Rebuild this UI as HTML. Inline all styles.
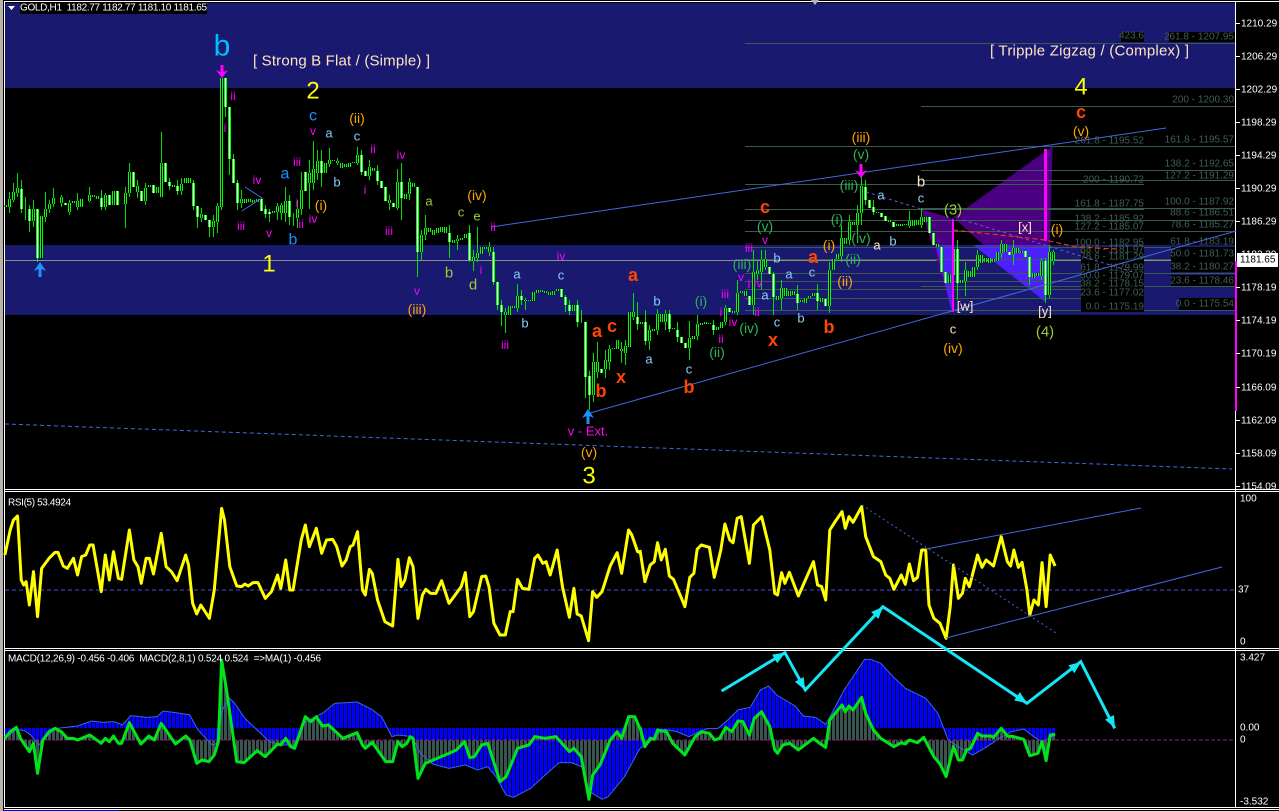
<!DOCTYPE html>
<html><head><meta charset="utf-8"><title>GOLD,H1</title>
<style>
html,body{margin:0;padding:0;background:#000;width:1279px;height:811px;overflow:hidden}
svg{display:block}
text{font-family:"Liberation Sans",sans-serif;font-size:12px;text-anchor:middle;dominant-baseline:central;white-space:pre}
.m{fill:#f0f}.o{fill:#ffa500;font-size:14px}.g{fill:#2fb35a;font-size:14px}.l{fill:#87cefa;font-size:13px}.n{fill:#9acd32;font-size:13px}.s{fill:#ffe4c4;font-size:13px}
.B{fill:#1e90ff;font-size:16px}.Y{fill:#ff0;font-size:24px}.r{fill:#ff4500;font-size:18px;font-weight:bold}
.ax text,.w{fill:#fff;font-size:10px;text-anchor:start}
.f text{fill:#3f5f55;font-size:10px;text-anchor:end}
.p{vector-effect:non-scaling-stroke;fill:none}
</style></head><body>
<svg width="1279" height="811" viewBox="0 0 1279 811" xmlns="http://www.w3.org/2000/svg">
<defs>
<pattern id="pb" patternUnits="userSpaceOnUse" width="9.8" height="3"><rect width="9.8" height="3" fill="#000030"/><rect width="7.35" height="3" fill="#0000ff"/></pattern>
<pattern id="pg" patternUnits="userSpaceOnUse" width="9.8" height="3"><rect width="9.8" height="3" fill="#000"/><rect width="7.35" height="3" fill="#38544f"/></pattern>
</defs>
<rect width="1279" height="811" fill="#000"/>
<rect x="0" y="0" width="3" height="811" fill="#b8b4ac"/>
<!-- bands -->
<rect x="5" y="3" width="1230" height="85" fill="#191970"/>
<rect x="5" y="245" width="1230" height="70" fill="#191970"/>
<!-- frames -->
<g fill="#fff">
<rect x="4" y="1" width="1275" height="1"/><rect x="4" y="1" width="1" height="807"/><rect x="1235" y="1" width="1" height="807"/>
<rect x="4" y="489" width="1275" height="1"/><rect x="4" y="491" width="1275" height="1"/>
<rect x="4" y="648" width="1275" height="1"/><rect x="4" y="650" width="1275" height="1"/>
<rect x="4" y="807" width="1275" height="1"/><rect x="4" y="809" width="1275" height="1"/>
</g>
<rect x="4" y="810" width="115" height="1" fill="#00f"/>
<path d="M811 0h8l-4 5z" fill="#b0b0b0"/>
<!-- price line -->
<rect x="5" y="260" width="1230" height="1" fill="#8c8c8c"/>
<!-- purple harmonic shapes -->
<g transform="translate(850 130) scale(.33333)">
<g fill="#4b0082"><path d="M215 238L305 545L310 266Z"/><path d="M310 262L608 48L600 340L585 515Z"/></g>
<g fill="#4f20ff"><path d="M256 345L305 545L310 345Z"/><path d="M370 345L600 345L585 515Z"/></g>
</g>
<!-- fib lines -->
<g fill="#3a5a50">
<rect x="745" y="43" width="490" height="1"/><rect x="921" y="106" width="314" height="1"/>
<rect x="745" y="146" width="490" height="1"/><rect x="921" y="170" width="314" height="1"/><rect x="921" y="180" width="314" height="1"/>
<rect x="745" y="184" width="399" height="1"/><rect x="921" y="208" width="314" height="1"/><rect x="745" y="209" width="399" height="1"/>
<rect x="745" y="220" width="490" height="1"/><rect x="745" y="231" width="490" height="1"/><rect x="745" y="247" width="490" height="1"/>
<rect x="745" y="259" width="490" height="1"/><rect x="745" y="273" width="490" height="1"/><rect x="745" y="281" width="399" height="1"/>
<rect x="921" y="286" width="314" height="1"/><rect x="745" y="289" width="399" height="1"/><rect x="745" y="298" width="399" height="1"/>
<rect x="745" y="310" width="490" height="1"/>
</g>
<!-- fib label backgrounds -->
<g fill="#000">
<rect x="20" y="3" width="187" height="11"/>
<rect x="1121" y="32" width="23" height="10"/><rect x="1169" y="32" width="66" height="10"/>
<rect x="1081" y="247" width="63" height="65"/><rect x="1171" y="247" width="64" height="25"/>
<rect x="1171" y="262" width="64" height="10"/><rect x="1171" y="275" width="64" height="11"/><rect x="1179" y="298" width="56" height="12"/>
</g>
<g class="f">
<text x="1144" y="36">423.6</text><text x="1234" y="37">261.8 - 1207.95</text><text x="1234" y="100">200 - 1200.30</text>
<text x="1144" y="141">261.8 - 1195.52</text><text x="1234" y="140">161.8 - 1195.57</text><text x="1234" y="164">138.2 - 1192.65</text>
<text x="1234" y="176">127.2 - 1191.29</text><text x="1144" y="180">200 - 1190.72</text><text x="1234" y="202">100.0 - 1187.92</text>
<text x="1144" y="204">161.8 - 1187.75</text><text x="1234" y="213">88.6 - 1186.51</text><text x="1144" y="219">138.2 - 1185.92</text>
<text x="1234" y="225">78.6 - 1185.27</text><text x="1144" y="227">127.2 - 1185.07</text><text x="1234" y="242">61.8 - 1183.19</text>
<text x="1144" y="243">100.0 - 1182.95</text><text x="1144" y="250">88.6 - 1181.97</text><text x="1234" y="254">50.0 - 1181.73</text>
<text x="1144" y="257">78.6 - 1181.29</text><text x="1234" y="267">38.2 - 1180.27</text><text x="1144" y="268">61.8 - 1179.99</text>
<text x="1144" y="276">50.0 - 1179.07</text><text x="1234" y="281">23.6 - 1178.46</text><text x="1144" y="284">38.2 - 1178.15</text>
<text x="1144" y="293">23.6 - 1177.02</text><text x="1234" y="304">0.0 - 1175.54</text><text x="1144" y="307">0.0 - 1175.19</text>
</g>
<!-- candles -->
<g transform="translate(.5 0)" shape-rendering="crispEdges" fill="none">
<path stroke="#00e000" stroke-width="1" d="M9 192V213M13 183V202M17 173V197M21 180V213M25 197V220M29 205V232M33 200V227M37 209V262M45 192V222M53 188V207M49 200V213M61 195V207M69 200V215M77 193V210M89 187V202M101 190V210M105 193V210M125 187V228M129 163V197M137 180V198M145 183V205M161 132V197M169 178V190M177 180V195M181 178V195M193 180V210M197 206V228M201 208V222M209 220V237M213 215V237M217 203V233M221 78V210M225 78V117M229 107V175M233 154V183M237 180V210M241 190V208M265 205V218M269 209V222M277 203V220M281 203V220M285 187V222M289 195V225M293 213V226M297 200V228M301 172V215M309 160V209M313 141V190M317 150V180M321 150V187M329 148V167M337 158V165M357 147V165M361 150V175M369 160V180M377 165V185M389 195V210M397 169V210M401 163V220M409 178V200M417 187V277M421 230V260M425 215V240M449 225V258M457 235V250M469 225V262M473 250V271M477 227V262M489 242V256M493 247V285M497 282V310M501 300V326M505 308V333M517 284V312M521 290V305M525 298V310M565 295V312M569 300V315M577 300V327M581 310V323M585 322V398M589 371V410M593 353V402M597 342V378M605 350V378M609 345V370M621 342V363M625 340V365M633 293V320M637 302V330M645 310V345M649 325V350M657 309V335M665 310V330M669 310V332M677 322V342M689 321V360M697 315V340M713 320V335M725 305V325M737 280V315M753 250V315M757 260V280M761 250V290M765 250V270M773 272V315M781 280V310M797 285V310M817 284V310M829 262V313M841 225V262M849 215V245M857 205V235M861 165V225M865 180V205M873 200V215M909 211V228M921 208V228M953 247V290M957 240V300M965 262V296M977 250V270M1001 240V258M1013 240V265M1029 257V285M1041 258V280M1045 258V303M1049 245V298M1053 250V265"/>
<g stroke="#00ff00" stroke-width="3">
<path id="w" d="M21 189V209M29 209V221M37 209V258M65 203V205M101 198V207M109 195V205M117 191V205M133 172V187M141 191V201M153 185V193M165 163V182M169 182V186M177 186V191M193 183V206M197 206V217M205 215V220M209 220V227M225 78V107M229 107V159M233 159V183M237 183V203M261 199V211M265 209V214M269 212V214M289 201V217M305 172V191M321 161V173M361 155V172M365 171V176M377 171V181M381 181V188M385 187V201M393 203V207M401 182V198M417 187V252M449 233V242M469 233V260M493 252V282M497 282V305M501 305V312M521 296V300M561 289V297M565 297V305M569 305V311M577 305V322M585 322V377M589 376V395M601 369V373M637 317V324M645 322V341M669 314V329M677 330V337M681 337V343M685 343V348M713 325V330M729 308V312M749 296V305M769 267V274M773 274V297M797 294V303M817 293V301M825 299V306M865 187V200M869 200V208M873 207V212M881 213V217M885 216V221M893 222V227M929 217V233M933 233V245M941 247V272M945 272V283M957 249V283M1009 252V255M1025 251V257M1029 257V277M1045 261V295"/>
<path id="k" d="M5 205V207M9 199V207M13 192V200M17 188V193M33 209V221M41 216V258M45 209V217M49 204V209M53 198V204M61 197V203M69 203V212M73 201V203M77 201V207M81 199V207M89 195V201M93 195V197M97 196V199M105 195V207M113 191V205M125 193V204M129 172V193M137 186V192M145 188V201M149 185V187M157 187V193M161 163V197M173 185V187M181 184V191M185 178V183M189 178V183M201 214V218M213 221V227M217 206V222M221 78V207M241 199V203M245 199V203M249 199V202M253 200V203M257 199V202M273 211V213M277 206V212M281 205V213M285 201V213M297 209V218M301 190V209M309 173V183M313 169V183M317 161V173M325 163V173M329 160V164M333 160V161M337 161V163M341 163V168M345 164V167M349 163V167M353 162V163M357 155V163M369 167V176M373 168V171M389 200V203M397 182V208M405 194V199M409 182V194M413 183V187M421 235V252M425 228V235M429 228V232M433 230V235M437 228V233M441 227V232M445 227V233M453 240V243M457 239V241M461 238V240M465 234V238M473 257V261M477 253V258M481 247V254M485 247V249M489 247V252M505 312V315M509 306V315M513 306V308M517 296V308M525 300V301M529 300V301M533 292V301M537 290V293M541 290V292M545 291V293M549 292V295M553 291V295M557 289V291M573 305V311M593 362V395M597 362V372M605 360V369M609 349V362M613 348V349M617 340V349M621 349V351M625 346V353M629 312V347M633 312V317M641 322V324M649 330V341M653 329V331M657 314V330M661 314V322M665 314V322M673 328V329M689 338V348M693 336V339M697 324V336M701 323V325M705 322V324M709 323V324M717 327V330M721 322V328M725 308V322M733 311V313M737 293V312M741 291V293M745 291V296M753 272V305M757 270V274M761 260V272M765 259V267M777 296V300M781 288V298M785 288V296M789 291V296M793 291V295M801 300V302M805 298V303M809 296V298M813 293V296M821 298V302M829 270V306M833 259V270M837 254V259M841 238V256M845 238V244M849 222V240M853 222V225M857 213V225M861 186V213M877 212V213M889 220V222M897 224V226M901 224V226M905 224V225M909 221V226M913 220V226M917 220V225M921 217V225M925 217V222M937 244V247M949 275V283M953 249V275M961 280V283M965 270V281M969 271V277M973 267V277M977 255V267M981 255V263M985 258V262M989 258V263M993 259V262M997 252V261M1001 244V253M1005 244V252M1013 248V254M1017 248V253M1021 251V253M1033 273V278M1037 273V276M1041 261V276M1049 252V295M1053 252V261"/>
</g>
<use href="#w" style="stroke:#fff;stroke-width:1"/>
<use href="#k" style="stroke:#000;stroke-width:1"/>
</g>
<!-- trend lines -->
<g fill="none" stroke="#4169e1" stroke-width="1">
<path d="M491 227L1166 128"/>
<path d="M590 413L1236 231"/>
<path stroke-dasharray="4 3" d="M5 424L1232 469"/>
<path d="M245 187L262 198L242 211"/>
</g>
<g fill="none" stroke-width="1">
<path stroke="#6a5acd" stroke-dasharray="3 3" d="M866 192L921 209M963 220L1133 272"/>
<path stroke="#ff4500" stroke-dasharray="5 3" d="M953 230L1027 238L1045 240L1077 247L1117 249"/>
</g>
<g fill="#f0f"><rect x="952" y="219" width="2" height="93"/><rect x="1044" y="149" width="3" height="92"/><rect x="1235" y="261" width="2" height="150"/></g>
<!-- arrows -->
<path fill="#1e90ff" d="M40 262L46 271L41.5 269V277H38.500V269L34 271Z"/>
<path fill="#1e90ff" d="M588 409L594 418L589.500 416V424H586.500V416L582 418Z"/>
<path fill="#f0f" d="M222 78L216 70L220.500 72V65H223.500V72L228 70Z"/>
<path fill="#f0f" d="M861 178L855 170L859.500 172V164H862.500V172L867 170Z"/>
<!-- labels -->
<g>
<text class="s" x="341.500" y="61" style="font-size:15px" textLength="177">[ Strong B Flat / (Simple) ]</text>
<text class="s" x="1089.500" y="51" style="font-size:15px" textLength="199">[ Tripple Zigzag / (Complex) ]</text>
<text x="222" y="46" style="font-size:30px;fill:#00bfff">b</text>
<text class="Y" x="313" y="91">2</text><text class="Y" x="269" y="264">1</text><text class="Y" x="589" y="476">3</text><text class="Y" x="1081" y="87">4</text>
<text class="m" x="233" y="96">ii</text><text class="m" x="225" y="128">i</text><text class="m" x="241" y="226">iii</text><text class="m" x="257" y="180">iv</text><text class="m" x="269" y="233">v</text>
<text class="B" x="285" y="174">a</text><text class="m" x="297" y="162">iii</text><text class="B" x="293" y="240">b</text><text class="B" x="313" y="116">c</text><text class="m" x="313" y="131">v</text>
<text class="l" x="329" y="133">a</text><text class="o" x="357" y="118">(ii)</text><text class="l" x="357" y="136">c</text><text class="l" x="337" y="182">b</text><text class="m" x="373" y="149">ii</text>
<text class="m" x="365" y="190">i</text><text class="m" x="389" y="231">iii</text><text class="m" x="401" y="155">iv</text><text class="o" x="321" y="205">(i)</text><text class="m" x="297" y="203">i</text>
<text class="m" x="301" y="224">ii</text><text class="m" x="313" y="219">iv</text>
<text class="m" x="417" y="291">v</text><text class="o" x="417" y="309">(iii)</text><text class="o" x="477" y="195">(iv)</text>
<text class="n" x="477" y="216">e</text><text class="n" x="461" y="212">c</text><text class="n" x="429" y="201">a</text><text class="n" x="449" y="273" style="font-size:15px">b</text><text class="n" x="473" y="285" style="font-size:15px">d</text>
<text class="m" x="493" y="227">ii</text><text class="m" x="561" y="256">iv</text><text class="l" x="561" y="275">c</text><text class="l" x="517" y="274">a</text><text class="l" x="525" y="323">b</text>
<text class="m" x="481" y="270">i</text><text class="m" x="505" y="345">iii</text>
<text class="r" x="633" y="275">a</text><text class="r" x="597" y="331">a</text><text class="r" x="612" y="326">c</text><text class="r" x="621" y="377">x</text><text class="r" x="601" y="391">b</text>
<text class="r" x="689" y="387">b</text><text class="r" x="829" y="327">b</text><text class="r" x="773" y="340">x</text><text class="r" x="813" y="257">a</text><text class="r" x="765" y="207">c</text>
<text class="l" x="657" y="301">b</text><text class="l" x="649" y="359">a</text><text class="l" x="689" y="369">c</text>
<text class="g" x="701" y="301">(i)</text><text class="g" x="717" y="352">(ii)</text><text class="m" x="733" y="322">iv</text><text class="m" x="721" y="339">ii</text><text class="m" x="721" y="312">i</text>
<text class="m" x="725" y="294">iii</text><text class="g" x="742" y="264">(iii)</text><text class="m" x="741" y="277">v</text><text class="m" x="749" y="284">i</text><text class="m" x="758" y="283">iv</text>
<text class="m" x="765" y="240">v</text><text class="m" x="757" y="312">ii</text><text class="g" x="749" y="328">(iv)</text><text class="m" x="749" y="248">iii</text><text class="g" x="765" y="226">(v)</text>
<text class="l" x="777" y="258">b</text><text class="l" x="789" y="274">a</text><text class="l" x="812" y="272">c</text><text class="l" x="765" y="295">a</text><text class="l" x="777" y="322">c</text><text class="l" x="801" y="318">b</text>
<text class="o" x="845" y="281">(ii)</text><text class="o" x="829" y="245">(i)</text><text class="o" x="861" y="137">(iii)</text><text class="g" x="861" y="154">(v)</text>
<text class="g" x="849" y="185">(iii)</text><text class="g" x="861" y="238">(iv)</text><text class="g" x="837" y="219">(i)</text><text class="g" x="853" y="259">(ii)</text>
<text class="l" x="881" y="195">a</text><text class="s" x="877" y="245">a</text><text class="l" x="893" y="241">b</text><text class="s" x="921" y="182" style="font-size:15px">b</text><text class="l" x="921" y="198">c</text>
<text class="n" x="953" y="210" style="font-size:15px">(3)</text><text class="s" x="1025" y="227">[x]</text><text class="s" x="965" y="306">[w]</text><text class="s" x="1045" y="311">[y]</text><text class="o" x="1057" y="229">(i)</text>
<text class="s" x="953" y="329">c</text><text class="o" x="953" y="348">(iv)</text><text class="n" x="1045" y="332" style="font-size:15px">(4)</text>
<text class="o" x="1081" y="131">(v)</text><text class="r" x="1081" y="112">c</text>
<text class="m" x="588" y="431" style="font-size:13px">v - Ext.</text><text class="o" x="589" y="452">(v)</text>
</g>
<!-- header -->
<path d="M8 6h7l-3.500 4z" fill="#fff"/>
<text class="w" x="20" y="8" textLength="187">GOLD,H1  1182.77 1182.77 1181.10 1181.65</text>
<!-- price axis -->
<g fill="#fff"><rect x="1236" y="23" width="4" height="1"/><rect x="1236" y="56" width="4" height="1"/><rect x="1236" y="89" width="4" height="1"/><rect x="1236" y="122" width="4" height="1"/><rect x="1236" y="155" width="4" height="1"/><rect x="1236" y="188" width="4" height="1"/><rect x="1236" y="221" width="4" height="1"/><rect x="1236" y="287" width="4" height="1"/><rect x="1236" y="320" width="4" height="1"/><rect x="1236" y="353" width="4" height="1"/><rect x="1236" y="387" width="4" height="1"/><rect x="1236" y="420" width="4" height="1"/><rect x="1236" y="453" width="4" height="1"/><rect x="1236" y="486" width="4" height="1"/></g>
<g class="ax" transform="translate(0 1)">
<text x="1241" y="23">1210.29</text><text x="1241" y="56">1206.29</text><text x="1241" y="89">1202.29</text><text x="1241" y="122">1198.29</text><text x="1241" y="155">1194.29</text><text x="1241" y="188">1190.29</text><text x="1241" y="221">1186.29</text><text x="1241" y="254">1182.29</text><text x="1241" y="287">1178.19</text><text x="1241" y="320">1174.19</text><text x="1241" y="353">1170.19</text><text x="1241" y="387">1166.09</text><text x="1241" y="420">1162.09</text><text x="1241" y="453">1158.09</text><text x="1241" y="486">1154.09</text>
<text x="1240" y="498">100</text><text x="1238" y="589">37</text><text x="1240" y="641">0</text>
<text x="1240" y="657">3.427</text><text x="1240" y="727">0.00</text><text x="1240" y="739">0</text><text x="1240" y="801">-3.532</text>
</g>
<rect x="1237" y="253" width="41" height="14" fill="#fff"/>
<text x="1240" y="260" style="fill:#000;font-size:10px;text-anchor:start">1181.65</text>
<!-- indicator labels -->
<text class="w" x="8" y="503" textLength="63">RSI(5) 53.4924</text>
<!-- RSI -->
<path d="M5 590H1235" stroke="#4a4ae0" stroke-dasharray="4 3" fill="none"/>
<g transform="translate(0 490) scale(.40816 .33333)"><polyline class="p" stroke="#ff0" stroke-width="3" stroke-linejoin="round" points="12,195 25,120 33,90 43,78 52,270 58,285 64,275 72,345 82,245 92,380 102,235 120,205 135,187 142,187 155,228 165,235 180,205 190,255 200,200 210,195 220,165 228,165 248,305 258,195 268,270 278,185 290,265 298,268 317,120 328,210 338,230 346,280 358,205 366,205 376,252 395,130 407,230 420,245 434,272 455,195 462,225 472,340 482,372 492,345 513,385 525,300 543,55 550,90 563,230 580,288 592,290 600,282 608,288 620,278 632,278 650,325 665,305 680,255 688,295 700,210 710,300 718,300 738,150 748,105 758,170 775,115 788,190 800,150 815,148 825,170 838,228 848,210 858,170 865,165 876,125 888,300 895,315 905,238 912,250 925,330 943,395 962,408 975,208 983,290 992,270 1003,203 1012,230 1024,385 1035,315 1043,298 1055,310 1068,310 1082,272 1100,340 1118,310 1130,290 1140,248 1151,380 1160,365 1180,260 1190,258 1198,290 1210,400 1225,435 1238,435 1250,365 1257,365 1268,268 1280,295 1296,298 1310,205 1318,195 1330,220 1338,215 1348,255 1365,180 1378,290 1395,382 1406,295 1414,372 1424,378 1442,452 1452,305 1462,322 1475,305 1495,228 1512,188 1523,250 1540,120 1548,135 1562,185 1568,187"/></g>
<g transform="translate(640 490) scale(.40816 .33333)"><polyline class="p" stroke="#ff0" stroke-width="3" stroke-linejoin="round" points="0,180 12,275 25,225 35,215 43,158 52,210 62,178 72,258 82,268 100,320 110,350 122,262 132,250 140,178 150,165 170,172 182,262 198,180 208,102 220,150 228,158 238,85 248,80 268,220 278,105 298,80 318,180 330,310 337,315 347,248 355,280 366,247 388,318 425,215 435,285 445,290 455,330 465,120 478,95 495,65 503,115 512,80 522,97 543,50 553,140 572,200 590,215 602,255 612,265 622,298 640,255 650,283 660,222 670,272 680,262 690,180 700,180 708,345 720,385 735,400 750,445 760,350 768,225 780,325 790,310 797,265 807,290 827,195 838,232 848,210 866,228 885,140 900,215 908,228 916,180 927,232 936,217 948,300 955,375 965,330 976,345 985,218 995,350 1005,195 1017,228"/></g>
<g fill="none" stroke="#4169e1"><path d="M926 549L1141 508M946 638L1222 567"/><path stroke-dasharray="2 3" d="M862 505L1056 633"/></g>
<!-- MACD -->
<g transform="translate(0 490) scale(.40816 .33333)">
<polygon fill="url(#pb)" points="12,745 40,718 60,722 75,735 95,765 110,745 135,716 160,712 190,708 225,693 250,697 280,695 300,705 320,677 360,682 385,680 400,663 430,668 465,675 485,720 520,765 532,760 545,660 560,622 575,640 600,685 630,720 660,755 690,765 720,765 745,700 765,685 790,670 820,640 875,636 910,658 935,680 960,740 975,735 1010,740 1030,790 1060,822 1100,835 1140,825 1170,840 1195,830 1215,860 1240,915 1258,922 1300,895 1340,850 1370,818 1400,818 1425,830 1445,905 1475,928 1490,920 1530,860 1568,775 1568,714 12,714"/>
<polygon fill="url(#pg)" points="12,751 12,745 25,725 40,712 50,745 72,785 82,760 92,850 105,750 120,725 135,715 150,725 165,745 180,745 190,750 220,735 248,760 258,745 268,755 278,738 290,760 298,760 317,698 345,762 365,738 378,750 395,700 430,762 455,738 465,750 482,820 495,810 512,815 525,795 535,755 543,510 555,600 580,815 598,818 630,782 650,800 680,762 688,765 700,745 712,770 722,775 748,680 762,695 775,680 790,708 805,705 840,745 875,728 888,765 895,775 912,757 945,815 962,815 975,755 985,770 997,760 1005,740 1012,745 1024,865 1042,820 1100,790 1118,780 1138,755 1151,803 1162,800 1180,765 1195,760 1225,875 1240,860 1268,775 1296,765 1310,740 1335,745 1362,740 1395,785 1406,775 1424,800 1443,928 1452,855 1470,825 1495,750 1512,725 1523,745 1540,680 1555,680 1568,715 1568,751"/>
<polyline class="p" stroke="#3a66e0" stroke-width="1" points="12,745 40,718 60,722 75,735 95,765 110,745 135,716 160,712 190,708 225,693 250,697 280,695 300,705 320,677 360,682 385,680 400,663 430,668 465,675 485,720 520,765 532,760 545,660 560,622 575,640 600,685 630,720 660,755 690,765 720,765 745,700 765,685 790,670 820,640 875,636 910,658 935,680 960,740 975,735 1010,740 1030,790 1060,822 1100,835 1140,825 1170,840 1195,830 1215,860 1240,915 1258,922 1300,895 1340,850 1370,818 1400,818 1425,830 1445,905 1475,928 1490,920 1530,860 1568,775"/>
</g>
<g transform="translate(640 490) scale(.40816 .33333)">
<polygon fill="url(#pb)" points="0,775 20,760 40,735 60,718 90,725 120,740 140,728 165,716 190,716 215,690 240,660 270,652 295,600 315,588 335,615 380,648 400,678 430,682 455,703 470,670 500,600 525,555 550,508 565,508 590,520 620,560 650,595 700,625 730,670 755,750 780,770 815,795 850,770 880,745 910,725 940,717 965,740 985,755 1017,735 1017,714 0,714"/>
<polygon fill="url(#pg)" points="0,751 0,712 12,770 25,745 35,748 43,720 65,725 80,760 110,795 135,740 150,725 170,730 183,750 195,745 210,712 225,725 240,693 252,695 268,735 280,685 298,665 318,710 330,780 337,790 350,765 367,760 388,780 425,745 440,760 455,772 465,690 478,670 495,645 503,665 512,648 522,660 543,622 553,670 572,720 590,745 622,770 640,758 650,762 660,750 680,758 695,742 720,800 735,822 750,860 768,770 780,810 790,810 800,780 810,775 827,730 838,738 860,738 866,742 885,715 900,738 916,740 940,748 955,797 975,790 985,755 995,812 1005,735 1017,733 1017,751"/>
<polyline class="p" stroke="#3a66e0" stroke-width="1" points="0,775 20,760 40,735 60,718 90,725 120,740 140,728 165,716 190,716 215,690 240,660 270,652 295,600 315,588 335,615 380,648 400,678 430,682 455,703 470,670 500,600 525,555 550,508 565,508 590,520 620,560 650,595 700,625 730,670 755,750 780,770 815,795 850,770 880,745 910,725 940,717 965,740 985,755 1017,735"/>
</g>
<path d="M5 740H1235" stroke="#a0108a" stroke-dasharray="4 2" fill="none"/>
<g transform="translate(0 490) scale(.40816 .33333)"><polyline class="p" stroke="#00e51a" stroke-width="3" stroke-linejoin="round" points="12,745 25,725 40,712 50,745 72,785 82,760 92,850 105,750 120,725 135,715 150,725 165,745 180,745 190,750 220,735 248,760 258,745 268,755 278,738 290,760 298,760 317,698 345,762 365,738 378,750 395,700 430,762 455,738 465,750 482,820 495,810 512,815 525,795 535,755 543,510 555,600 580,815 598,818 630,782 650,800 680,762 688,765 700,745 712,770 722,775 748,680 762,695 775,680 790,708 805,705 840,745 875,728 888,765 895,775 912,757 945,815 962,815 975,755 985,770 997,760 1005,740 1012,745 1024,865 1042,820 1100,790 1118,780 1138,755 1151,803 1162,800 1180,765 1195,760 1225,875 1240,860 1268,775 1296,765 1310,740 1335,745 1362,740 1395,785 1406,775 1424,800 1443,928 1452,855 1470,825 1495,750 1512,725 1523,745 1540,680 1555,680 1568,715"/></g>
<g transform="translate(640 490) scale(.40816 .33333)"><polyline class="p" stroke="#00e51a" stroke-width="3" stroke-linejoin="round" points="0,712 12,770 25,745 35,748 43,720 65,725 80,760 110,795 135,740 150,725 170,730 183,750 195,745 210,712 225,725 240,693 252,695 268,735 280,685 298,665 318,710 330,780 337,790 350,765 367,760 388,780 425,745 440,760 455,772 465,690 478,670 495,645 503,665 512,648 522,660 543,622 553,670 572,720 590,745 622,770 640,758 650,762 660,750 680,758 695,742 720,800 735,822 750,860 768,770 780,810 790,810 800,780 810,775 827,730 838,738 860,738 866,742 885,715 900,738 916,740 940,748 955,797 975,790 985,755 995,812 1005,735 1017,733"/></g>
<text class="w" x="8" y="659" textLength="313">MACD(12,26,9) -0.456 -0.406  MACD(2,8,1) 0.524 0.524  =&gt;MA(1) -0.456</text>
<!-- cyan arrows -->
<polyline fill="none" stroke="#14e6f5" stroke-width="3" points="721.600,691 784.900,652.700 805.300,690 882.900,606.700 1026.900,703.300 1080.800,661.700 1114.700,728.300"/>
<g fill="#14e6f5">
<path d="M785 652.700L777.300 663.200L772.100 654.600Z"/><path d="M805 690L803.700 677L794.900 681.800Z"/>
<path d="M883 606.700L878.500 618.900L871.100 612.100Z"/><path d="M1027 703L1019.800 692.100L1014.200 700.500Z"/>
<path d="M1081 662L1074.400 673.300L1068.400 665.300Z"/><path d="M1115 728L1113.900 715L1105.100 719.600Z"/>
</g>
</svg>
</body></html>
